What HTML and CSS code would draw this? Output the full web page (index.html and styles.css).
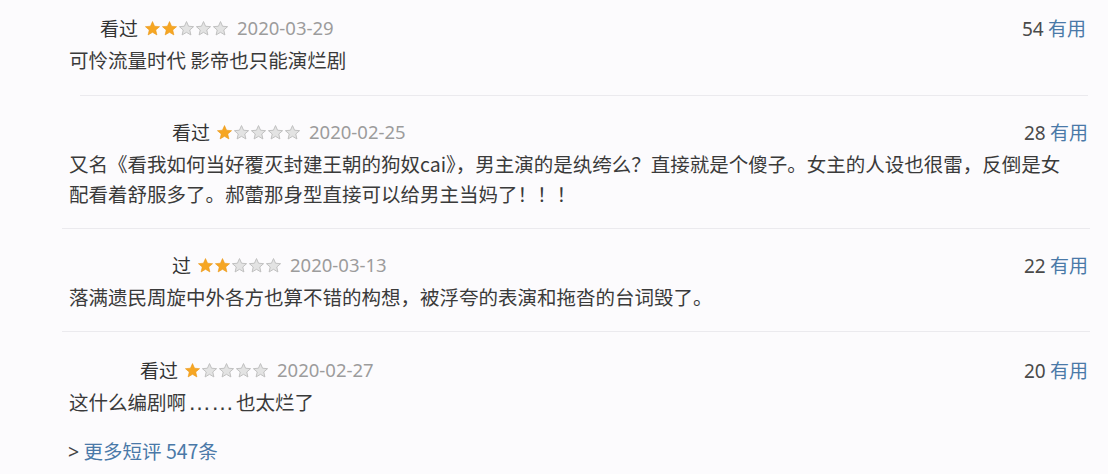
FILE: index.html
```html
<!DOCTYPE html>
<html lang="zh-CN">
<head>
<meta charset="utf-8">
<title>短评</title>
<link rel="stylesheet" href="styles.css">
</head>
<body>
<svg width="0" height="0" class="defs" aria-hidden="true">
  <defs>
    <symbol id="star" viewBox="0 0 24 24">
      <path d="M12 2.2l2.9 6.6 7.1.6-5.4 4.7 1.6 7-6.2-3.7-6.2 3.7 1.6-7L2 9.4l7.1-.6z"/>
    </symbol>
  </defs>
</svg>
<div class="comments">
  <div class="item first">
    <div class="head">
      <span class="info i1">
        <span class="status">看过</span>
        <span class="stars"><svg class="on"><use href="#star"/></svg><svg class="on"><use href="#star"/></svg><svg class="off"><use href="#star"/></svg><svg class="off"><use href="#star"/></svg><svg class="off"><use href="#star"/></svg></span>
        <span class="date">2020-03-29</span>
      </span>
      <span class="votes"><span class="num">54</span> <a class="useful">有用</a></span>
    </div>
    <p class="text">可怜流量时代 影帝也只能演烂剧</p>
  </div>
  <div class="item">
    <div class="head">
      <span class="info i2">
        <span class="status">看过</span>
        <span class="stars"><svg class="on"><use href="#star"/></svg><svg class="off"><use href="#star"/></svg><svg class="off"><use href="#star"/></svg><svg class="off"><use href="#star"/></svg><svg class="off"><use href="#star"/></svg></span>
        <span class="date">2020-02-25</span>
      </span>
      <span class="votes"><span class="num">28</span> <a class="useful">有用</a></span>
    </div>
    <p class="text">又名《看我如何当好覆灭封建王朝的狗奴cai》，男主演的是纨绔么？直接就是个傻子。女主的人设也很雷，反倒是女配看着舒服多了。郝蕾那身型直接可以给男主当妈了！！！</p>
  </div>
  <div class="item">
    <div class="head">
      <span class="info i3">
        <span class="status">过</span>
        <span class="stars"><svg class="on"><use href="#star"/></svg><svg class="on"><use href="#star"/></svg><svg class="off"><use href="#star"/></svg><svg class="off"><use href="#star"/></svg><svg class="off"><use href="#star"/></svg></span>
        <span class="date">2020-03-13</span>
      </span>
      <span class="votes"><span class="num">22</span> <a class="useful">有用</a></span>
    </div>
    <p class="text">落满遗民周旋中外各方也算不错的构想，被浮夸的表演和拖沓的台词毁了。</p>
  </div>
  <div class="item last">
    <div class="head">
      <span class="info i4">
        <span class="status">看过</span>
        <span class="stars"><svg class="on"><use href="#star"/></svg><svg class="off"><use href="#star"/></svg><svg class="off"><use href="#star"/></svg><svg class="off"><use href="#star"/></svg><svg class="off"><use href="#star"/></svg></span>
        <span class="date">2020-02-27</span>
      </span>
      <span class="votes"><span class="num">20</span> <a class="useful">有用</a></span>
    </div>
    <p class="text">这什么编剧啊<span class="dots">……</span>也太烂了</p>
  </div>
  <div class="more"><span class="arrow">&gt;</span> <a class="more-link">更多短评 547条</a></div>
</div>
</body>
</html>
```

FILE: styles.css
```css
html, body {
  margin: 0;
  padding: 0;
  background: #fcfbfd;
}
body {
  font-family: "Noto Sans CJK SC", "Noto Sans", sans-serif;
  color: #3a3a3a;
  font-size: 19.5px;
}
.defs {
  position: absolute;
  width: 0;
  height: 0;
}
.comments {
  margin-left: 62px;
  width: 1028px;
  padding-top: 13px;
}
.item {
  padding: 0 2px 19px 7px;
  border-bottom: 1px solid #ebeaee;
}
.item.first {
  padding-bottom: 20px;
  margin-left: 18px;
  margin-right: 2px;
  padding-left: 0;
}
.item.first .text,
.item.first .i1 {
  margin-left: -11px;
}
.item + .item {
  padding-top: 21px;
}
.item.last {
  border-bottom: none;
  padding-top: 23px;
  padding-bottom: 0;
}
.head {
  display: flex;
  justify-content: space-between;
  align-items: center;
  height: 30px;
  line-height: 30px;
  margin-bottom: 2px;
}
.info {
  display: flex;
  align-items: center;
  gap: 6px;
}
.i1 { padding-left: 31px; }
.i2 { padding-left: 103px; }
.i3 { padding-left: 103px; }
.i4 { padding-left: 71px; }
.status {
  color: #333;
  font-size: 19px;
}
.stars {
  display: flex;
  align-items: center;
  gap: 0;
}
.stars svg {
  width: 17px;
  height: 17px;
}
.stars .on {
  fill: #f6a623;
  stroke: #e99510;
  stroke-width: 0.8;
}
.stars .off {
  fill: #e3e3e3;
  stroke: #bdbdbd;
  stroke-width: 1.3;
}
.date {
  font-family: "Noto Sans", sans-serif;
  color: #9c9c9c;
  font-size: 18.5px;
  margin-left: 2px;
}
.votes {
  font-size: 19px;
}
.num {
  font-family: "Noto Sans", sans-serif;
  color: #4a4a4a;
}
.useful {
  color: #4a79a8;
}
.text {
  margin: 0 10px 0 0;
  line-height: 30px;
  color: #3a3a3a;
}
.dots {
  font-family: "Liberation Sans", sans-serif;
  font-size: 23px;
  line-height: 1;
  padding: 0 2px;
}
.more {
  margin-top: 19px;
  padding-left: 6px;
  line-height: 30px;
  font-size: 19.5px;
}
.arrow {
  color: #444;
  font-family: "Noto Sans", sans-serif;
}
.more-link {
  color: #4a79a8;
}
```
